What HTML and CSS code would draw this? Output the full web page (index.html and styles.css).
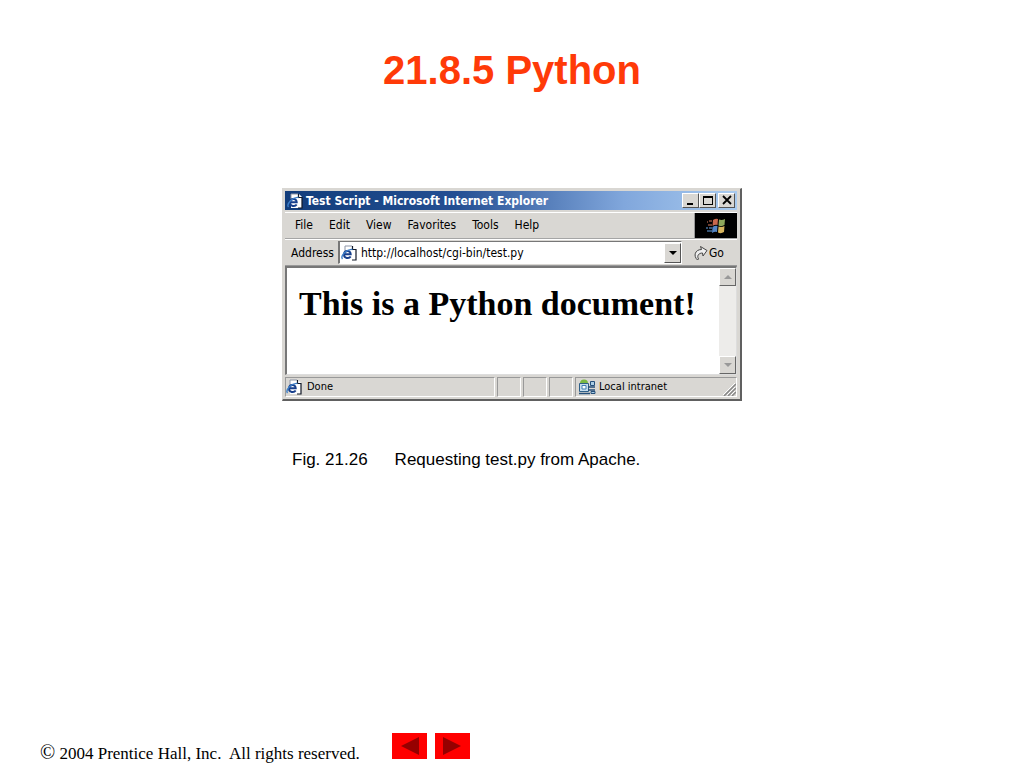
FILE: index.html
```html
<!DOCTYPE html>
<html lang="en">
<head>
<meta charset="utf-8">
<title>21.8.5 Python</title>
<link rel="stylesheet" href="styles.css">
</head>
<body>
<svg class="defs" aria-hidden="true">
  <symbol id="ie" viewBox="0 0 16 16">
    <path d="M4 1h8l3 3v11H4z" fill="#fff"/>
    <path d="M4 6V1h7" fill="none" stroke="#8d95a6"/>
    <path d="M11.500 1v3.500H15V15h-4" fill="none" stroke="#111827" stroke-width="1.200"/>
    <path d="M3.500 9.300h6.200C9.700 4.500 3 5 3 9.500c0 4 5 4.500 6.700 2" fill="none" stroke="#173f8c" stroke-width="2"/>
    <path d="M1.500 14C-1 11 6 3.500 11.500 4.500" fill="none" stroke="#3c7fc8" stroke-width="1.400"/>
  </symbol>
</svg>
<main class="slide">
  <h1 class="slide-title">21.8.5 Python</h1>
  <figure class="figure">
    <section class="window" aria-label="Browser window">
      <header class="titlebar">
        <svg class="icon"><use href="#ie"/></svg>
        <span class="window-title">Test Script - Microsoft Internet Explorer</span>
        <button class="caption-button" aria-label="Minimize"><svg viewBox="0 0 12 11"><path d="M2 8h6v2H2z"/></svg></button>
        <button class="caption-button" aria-label="Maximize"><svg viewBox="0 0 12 11"><path d="M1 1h10v9H1zM2 3v6h8V3z" fill-rule="evenodd"/></svg></button>
        <button class="caption-button close" aria-label="Close"><svg viewBox="0 0 12 11"><path d="M2 1l8 8M10 1L2 9" stroke="#000" stroke-width="1.800"/></svg></button>
      </header>
      <div class="menu-row">
        <nav class="menu">
          <button>File</button><button>Edit</button><button>View</button><button>Favorites</button><button>Tools</button><button>Help</button>
        </nav>
        <div class="brand">
          <svg viewBox="0 0 22 18">
            <path d="M8 3q3-2 5-1l-.5 6q-2-1-5 1z" fill="#c9684d"/>
            <path d="M14 2.500q3 1 6-.5l-.5 6q-3 2-6 .5z" fill="#8fa75b"/>
            <path d="M7.500 10q3-2 5-1l-.5 6q-2-1-5 1z" fill="#5385c5"/>
            <path d="M13.500 9.500q3 1 6-.5l-.5 6q-3 2-6 .5z" fill="#d7b55e"/>
            <path d="M2 5h1M4 4h3M3 8h4" stroke="#93513f" stroke-width="1.500"/>
            <path d="M1 11h2M4 11h3M2 14h5" stroke="#456f9c" stroke-width="1.500"/>
          </svg>
        </div>
      </div>
      <div class="address-row">
        <label for="address">Address</label>
        <div class="address-box">
          <svg class="icon"><use href="#ie"/></svg>
          <input id="address" type="text" value="http://localhost/cgi-bin/test.py">
          <button class="drop" aria-label="Show addresses"><svg viewBox="0 0 8 4"><path d="M0 0h8L4 4z"/></svg></button>
        </div>
        <button class="go"><svg viewBox="0 0 14 16"><path d="M3.500 15C-1 11 1 4.500 7.500 4.500L6.500 1.500 13 5.500 9 11 8.500 8C5 8 2.500 10.500 4.500 14z" fill="#eee" stroke="#444"/></svg>Go</button>
      </div>
      <div class="viewport">
        <div class="document"><h2>This is a Python document!</h2></div>
        <div class="scrollbar">
          <button aria-label="Scroll up"><svg viewBox="0 0 8 4"><path d="M0 4h8L4 0z"/></svg></button>
          <button aria-label="Scroll down"><svg viewBox="0 0 8 4"><path d="M0 0h8L4 4z"/></svg></button>
        </div>
      </div>
      <footer class="status">
        <div class="pane wide"><svg class="icon"><use href="#ie"/></svg>Done</div>
        <div class="pane small"></div><div class="pane small"></div><div class="pane small"></div>
        <div class="pane zone">
          <svg class="zone-icon" viewBox="0 0 18 16">
            <circle cx="6" cy="4.500" r="4" fill="#79b843"/>
            <path d="M1.500 4.500h9v8h-9z" fill="#c5dcec" stroke="#2e5f88"/>
            <path d="M4 6.500h4v3.500H4z" fill="#fff" stroke="#3f80b4"/>
            <path d="M1 14.500h11M10 11h7M10 8h7" stroke="#244f7a" stroke-width="1.500"/>
            <path d="M12.500 2.500h4v4h-4zM13 12.500h4v2h-4z" fill="#a9cce4" stroke="#244f7a"/>
          </svg>Local intranet
          <svg class="grip" viewBox="0 0 13 13"><path d="M1 13L13 1M5 13l8-8M9 13l4-4" stroke="#888" stroke-width="1.500"/><path d="M0 12L12 0M4 12l8-8M8 12l4-4" stroke="#fff"/></svg>
        </div>
      </footer>
    </section>
    <figcaption class="caption"><span>Fig. 21.26</span><span>Requesting test.py from Apache.</span></figcaption>
  </figure>
  <footer class="footer">
    <p><span class="copyright">©</span> 2004 Prentice Hall, Inc.&nbsp; All rights reserved.</p>
    <nav class="pager">
      <button aria-label="Previous slide"><svg viewBox="0 0 35 26"><path d="M27 4v18L9 13z"/></svg></button>
      <button aria-label="Next slide"><svg viewBox="0 0 35 26"><path d="M8 4v18l18-9z"/></svg></button>
    </nav>
  </footer>
</main>
</body>
</html>
```
FILE: styles.css
```css
* { box-sizing: border-box; }
body { margin: 0; background: #fff; color: #000; }
button { margin: 0; padding: 0; border: 0; background: none; color: inherit; font: inherit; }
svg { display: block; flex: none; }
.defs { position: absolute; width: 0; height: 0; }
.slide { min-height: 100vh; display: flex; flex-direction: column; align-items: center; padding: 46px 40px 4px; }
.slide-title { margin: 0; color: #ff3a08; font: bold 40px/48px "Liberation Sans", Arial, sans-serif; }
.figure { width: 460px; max-width: 100%; margin: 94px 0 0; }
.window { background: #d9d7d3; border: 1px solid #d9d7d3; border-right: 2px solid #606060; border-bottom: 2px solid #606060; padding: 2px 3px 1px 2px; font: 12px/14px "DejaVu Sans Condensed", Tahoma, sans-serif; }
.icon { width: 16px; height: 16px; }
.titlebar { display: flex; align-items: center; height: 19px; padding: 0 2px; background: linear-gradient(90deg, #123d7b, #244f93 38%, #81a7dc 75%, #a8caef); color: #fff; }
.window-title { flex: 1; padding-left: 3px; font-weight: bold; white-space: nowrap; }
.caption-button { width: 17px; height: 15px; background: #d9d7d3; border: 1px solid; border-color: #fff #555 #555 #fff; display: grid; place-items: center; }
.caption-button svg { width: 12px; height: 11px; }
.close { margin-left: 2px; }
.menu-row { display: flex; height: 27px; margin-top: 2px; border-top: 1px solid #fff; border-bottom: 1px solid #a5a5a5; }
.menu { flex: 1; display: flex; align-items: center; gap: 16px; padding: 0 10px 2px; border-right: 1px solid #999; }
.brand { width: 42px; height: 25px; background: #000; display: grid; place-items: center; }
.brand svg { width: 22px; height: 18px; }
.address-row { display: flex; align-items: center; height: 27px; padding-left: 6px; border-top: 1px solid #fff; border-bottom: 1px solid #999; }
.address-box { flex: 1; display: flex; align-items: center; height: 23px; margin-left: 4px; padding-left: 1px; background: #fff; border: 1px solid; border-color: #777 #fff #fff #777; border-left-width: 2px; }
.address-box input { flex: 1; min-width: 0; height: 20px; padding: 0 4px; border: 0; background: none; color: #000; font: inherit; }
.drop { width: 17px; height: 20px; background: #d9d7d3; border: 1px solid; border-color: #fff #555 #555 #fff; display: grid; place-items: center; }
.drop svg, .scrollbar svg { width: 8px; height: 4px; }
.go { display: flex; align-items: center; gap: 1px; width: 55px; padding-left: 12px; }
.go svg { width: 14px; height: 16px; }
.viewport { display: flex; height: 109px; background: #fff; border: 1px solid #ddd; border-top: 2px solid #777; border-left: 2px solid #777; }
.document { flex: 1; padding: 17px 12px; }
.document h2 { margin: 0; font: bold 34px/38px "Liberation Serif", "Times New Roman", serif; white-space: nowrap; }
.scrollbar { width: 17px; display: flex; flex-direction: column; justify-content: space-between; background: #edecea; }
.scrollbar button { width: 17px; height: 18px; background: #d9d7d3; border: 1px solid; border-color: #fff #666 #666 #fff; display: grid; place-items: center; fill: #999; }
.status { display: flex; gap: 2px; height: 23px; padding-top: 2px; font-size: 11px; }
.pane { display: flex; align-items: center; height: 20px; border: 1px solid; border-color: #999 #fff #fff #999; white-space: nowrap; }
.wide { flex: 1; gap: 5px; }
.small { width: 24px; }
.zone { position: relative; width: 162px; padding-left: 2px; gap: 3px; }
.zone-icon { width: 18px; height: 16px; }
.grip { position: absolute; right: 0; bottom: 0; width: 13px; height: 13px; }
.caption { display: flex; gap: 27px; margin-top: 49px; padding-left: 10px; font: 17px/20px "Liberation Sans", Arial, sans-serif; white-space: nowrap; }
.footer { align-self: stretch; display: flex; align-items: flex-start; gap: 32px; margin-top: auto; }
.footer p { margin: 9px 0 0; font: 17px/20px "Liberation Serif", "Times New Roman", serif; white-space: nowrap; }
.copyright { font-size: 20px; line-height: 20px; }
.pager { display: flex; gap: 8px; }
.pager button { width: 35px; height: 26px; background: #f00; fill: #960000; }
.pager svg { width: 35px; height: 26px; }
```
